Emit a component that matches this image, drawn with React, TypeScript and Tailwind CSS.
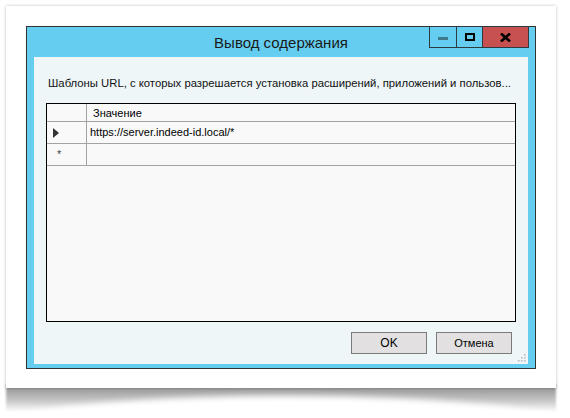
import React from "react";

const font = { fontFamily: '"Liberation Sans", Arial, sans-serif' };

const WindowButtons: React.FC = () => (
  <div className="absolute right-[6px] top-[-1px] flex h-[22px]">
    <div className="flex w-[28px] items-center justify-center border border-[#2d3a40] bg-[#65cef0]">
      <div className="mt-[3px] h-[3px] w-[10px] bg-[#3d7a8c]" />
    </div>
    <div className="flex w-[26px] items-center justify-center border-y border-r border-[#2d3a40] bg-[#65cef0]">
      <div className="h-[8px] w-[10px] border-2 border-black" />
    </div>
    <div className="flex w-[46px] items-center justify-center border-y border-r border-[#2d3a40] bg-[#c75050]">
      <svg width="11" height="9" viewBox="0 0 11 9">
        <path d="M1 0.5 L10 8.5 M10 0.5 L1 8.5" stroke="#000" strokeWidth="2.6" />
      </svg>
    </div>
  </div>
);

const DataGrid: React.FC = () => (
  <div className="mx-[12px] mt-[12px] h-[219px] border border-black bg-[#f9f9f9]">
    {/* header */}
    <div className="flex h-[18px] border-b border-[#a3a3a3]">
      <div className="w-[40px] border-r border-[#a3a3a3]" />
      <div className="flex-1 pl-[6px] text-[11px] leading-[18px] text-black">Значение</div>
    </div>
    {/* row 1 */}
    <div className="flex h-[22px] border-b border-[#a3a3a3]">
      <div className="flex w-[40px] items-center border-r border-[#a3a3a3] pl-[6px]">
        <svg width="6" height="10" viewBox="0 0 6 10">
          <path d="M0 0 L6 5 L0 10 Z" fill="#333" />
        </svg>
      </div>
      <div className="flex-1 pl-[3px] text-[11px] leading-[21px] text-black">
        https://server.indeed-id.local/*
      </div>
    </div>
    {/* new row */}
    <div className="flex h-[22px] border-b border-[#a3a3a3]">
      <div className="flex w-[40px] items-center border-r border-[#a3a3a3] pl-[10px]">
        <span className="text-[11px] leading-none text-[#444]">*</span>
      </div>
      <div className="flex-1" />
    </div>
  </div>
);

export default function App() {
  return (
    <div className="relative h-[418px] w-[570px] overflow-hidden bg-white" style={font}>
      {/* curled paper shadow */}
      <div className="absolute left-[6px] top-[384px] h-[28px] w-[550px] bg-[linear-gradient(to_bottom,#8a8a8a,#c8c8c8_60%,#ffffff)] blur-[1px]" />
      <div className="absolute left-[-30px] top-[396px] h-[80px] w-[630px] rounded-[50%] bg-white blur-[3px]" />

      {/* paper */}
      <div className="relative ml-[6px] mt-[6px] h-[382px] w-[550px] bg-white px-[20px] pt-[20px] shadow-[0_0_3px_rgba(0,0,0,0.25)]">
        {/* window */}
        <div className="relative flex h-[343px] w-[510px] flex-col border border-[#333] bg-[#65cef0]">
          <WindowButtons />
          <div className="flex h-[30px] shrink-0 items-center justify-center pt-[2px] text-[15px] text-[#1a1a1a]">
            Вывод содержания
          </div>
          <div className="mx-[7px] mb-[7px] flex flex-1 flex-col bg-[#eef6f8]">
            <div className="mt-[18px] whitespace-nowrap pl-[14px] text-[11.3px] leading-[16px] text-[#111]">
              Шаблоны URL, с которых разрешается установка расширений, приложений и пользов...
            </div>
            <DataGrid />
            <div className="mr-[16px] mt-[10px] flex justify-end gap-[9px]">
              <div className="flex h-[22px] w-[76px] items-center justify-center border border-[#7a7a7a] bg-[#e2e0e0] text-[12px] text-black">
                OK
              </div>
              <div className="flex h-[22px] w-[76px] items-center justify-center border border-[#7a7a7a] bg-[#e2e0e0] text-[11px] text-black">
                Отмена
              </div>
            </div>
            <div className="mr-[2px] mt-auto mb-[2px] flex justify-end">
              <svg width="8" height="8" viewBox="0 0 8 8">
                <rect x="6" y="0" width="1.5" height="1.5" fill="#b8b8b8" />
                <rect x="3" y="3" width="1.5" height="1.5" fill="#b8b8b8" />
                <rect x="6" y="3" width="1.5" height="1.5" fill="#b8b8b8" />
                <rect x="0" y="6" width="1.5" height="1.5" fill="#b8b8b8" />
                <rect x="3" y="6" width="1.5" height="1.5" fill="#b8b8b8" />
                <rect x="6" y="6" width="1.5" height="1.5" fill="#b8b8b8" />
              </svg>
            </div>
          </div>
        </div>
      </div>
    </div>
  );
}
